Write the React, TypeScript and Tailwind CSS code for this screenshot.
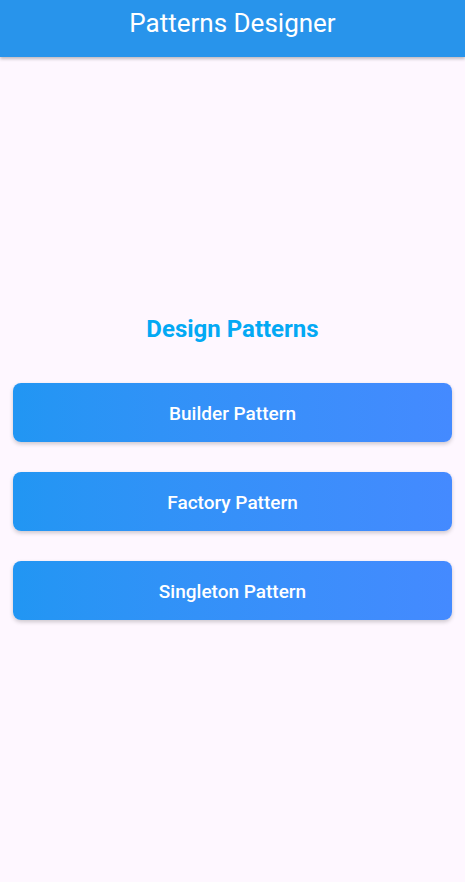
const patterns = ['Builder Pattern', 'Factory Pattern', 'Singleton Pattern'];

export default function App() {
  return (
    <div
      className="flex h-[882px] w-[465px] flex-col bg-[#fef7ff]"
      style={{ fontFamily: 'Roboto, "Liberation Sans", sans-serif' }}
    >
      <header className="relative z-10 flex h-[57px] items-center justify-center bg-[#2894eb] pb-[12px] shadow-[0_2px_3px_rgba(0,0,0,0.25)]">
        <h1 className="text-[26px] leading-[30px] font-normal text-white">Patterns Designer</h1>
      </header>
      <main className="flex flex-1 flex-col items-center justify-center px-[13px] pb-[4px]">
        <h2 className="text-[24px] leading-[28px] font-bold text-[#03a9f4]">Design Patterns</h2>
        <div className="mt-[40px] flex w-full flex-col gap-[30px]">
          {patterns.map((name) => (
            <button
              key={name}
              className="flex h-[59px] w-full items-center justify-center rounded-[8px] bg-gradient-to-r from-[#2196f3] to-[#448aff] pt-[3px] text-[19px] font-medium text-white shadow-[0_2px_4px_rgba(0,0,0,0.2)]"
            >
              {name}
            </button>
          ))}
        </div>
      </main>
    </div>
  );
}
